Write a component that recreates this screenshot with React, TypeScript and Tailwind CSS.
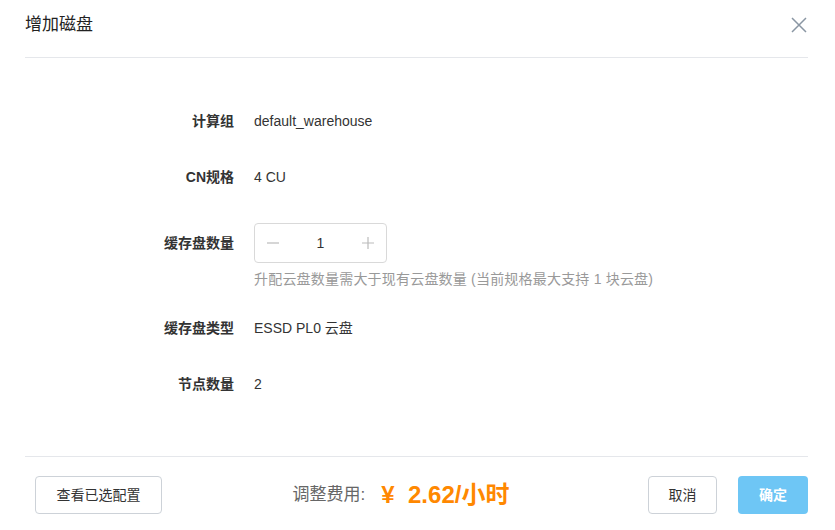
const font = { fontFamily: '"Liberation Sans", "Noto Sans CJK SC", sans-serif' }

function Row({ label, children, className = "" }: { label: string; children: React.ReactNode; className?: string }) {
  return (
    <div className={"flex items-center " + className}>
      <div className="w-[234px] shrink-0 text-right text-[14px] font-bold text-[#333]">{label}</div>
      <div className="ml-[20px] text-[14px] text-[#333]">{children}</div>
    </div>
  )
}

export default function App() {
  return (
    <div className="w-[835px] h-[530px] bg-white flex flex-col" style={font}>
      <div className="ml-[25px] mr-[27px] h-[58px] flex items-center justify-between border-b border-[#e5e7eb]">
        <div className="text-[17px] text-[#222] -mt-[7px]">增加磁盘</div>
        <svg width="16" height="16" viewBox="0 0 16 16" className="-mt-[8px] mr-[1px]">
          <path d="M1 1L15 15M15 1L1 15" stroke="#8a96a3" strokeWidth="1.5" />
        </svg>
      </div>

      <div className="flex flex-col pt-[47px] h-[398px]">
        <Row label="计算组" className="h-8">default_warehouse</Row>
        <Row label="CN规格" className="h-8 mt-6">4 CU</Row>
        <Row label="缓存盘数量" className="h-10 mt-[30px]">
          <div className="w-[133px] h-10 border border-[#d9d9d9] rounded flex items-center justify-between px-[12px]">
            <svg width="12" height="12" viewBox="0 0 12 12"><path d="M0 6H12" stroke="#bbb" strokeWidth="1.2" /></svg>
            <span className="text-[14px] text-[#333]">1</span>
            <svg width="12" height="12" viewBox="0 0 12 12"><path d="M0 6H12M6 0V12" stroke="#bbb" strokeWidth="1.2" /></svg>
          </div>
        </Row>
        <div className="ml-[254px] mt-2 h-4 leading-4 text-[14px] text-[#999] tracking-[0.2px]">升配云盘数量需大于现有云盘数量 (当前规格最大支持 1 块云盘)</div>
        <Row label="缓存盘类型" className="h-8 mt-[25px]">ESSD PL0 云盘</Row>
        <Row label="节点数量" className="h-8 mt-6">2</Row>
      </div>
      <div className="ml-[25px] mr-[27px] border-t border-[#e5e7eb]" />

      <div className="flex items-center px-[35px] pr-[27px] pt-[19px]">
        <button className="w-[127px] h-[38px] border border-[#cdd2d8] rounded text-[14px] text-[#333]">查看已选配置</button>
        <div className="flex-1 flex items-center justify-center -ml-[8px]">
          <span className="text-[17px] text-[#666]">调整费用:</span>
          <span className="ml-[16px] text-[24px] font-bold text-[#ff8800] whitespace-pre">¥  2.62/小时</span>
        </div>
        <button className="w-[69px] h-[38px] border border-[#cdd2d8] rounded text-[14px] text-[#333]">取消</button>
        <button className="ml-[21px] w-[70px] h-[38px] rounded bg-[#6ec6f5] text-[14px] font-bold text-white">确定</button>
      </div>
    </div>
  )
}
